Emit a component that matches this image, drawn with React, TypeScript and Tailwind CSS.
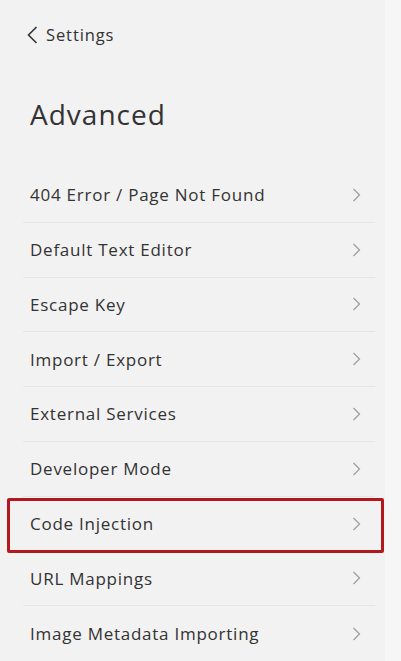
const items = [
  '404 Error / Page Not Found',
  'Default Text Editor',
  'Escape Key',
  'Import / Export',
  'External Services',
  'Developer Mode',
  'Code Injection',
  'URL Mappings',
  'Image Metadata Importing',
];

export default function App() {
  return (
    <div
      className="flex h-[661px] w-[401px] overflow-hidden bg-[#f6f6f6] text-[#333]"
      style={{ fontFamily: '"Open Sans", Lato, sans-serif' }}
    >
      <div className="w-[385px] shrink-0 bg-[#f2f2f2]">
        {/* back link */}
        <div className="flex items-center gap-[8px] pl-[27px] pt-[26px]">
          <svg width="11" height="18" viewBox="0 0 11 18" fill="none" stroke="#333" strokeWidth="1.6">
            <polyline points="9.5,1 1.5,9 9.5,17" />
          </svg>
          <span className="text-[16.5px] tracking-[0.9px] leading-none">Settings</span>
        </div>

        <h1 className="pl-[30px] pt-[56px] text-[28px] tracking-[1px] leading-none">Advanced</h1>

        <ul className="ml-[23px] mr-[10px] mt-[40px]">
          {items.map((label) => (
            <li
              key={label}
              className="relative flex h-[54.8px] items-center justify-between border-b border-[#e6e6e6] pl-[7px] pr-[14px] last:border-b-0"
            >
              <span className="text-[17px] tracking-[0.75px]">{label}</span>
              <svg width="9" height="14" viewBox="0 0 9 14" fill="none" stroke="#a0a0a0" strokeWidth="1.3">
                <polyline points="1.5,1 7.5,7 1.5,13" />
              </svg>
              {label === 'Code Injection' && (
                <div className="pointer-events-none absolute -left-[16px] -right-[9px] top-[1px] bottom-[-2px] rounded-[2px] border-[3px] border-[#b3191c]" />
              )}
            </li>
          ))}
        </ul>
      </div>
      <div className="flex-1" />
    </div>
  );
}
